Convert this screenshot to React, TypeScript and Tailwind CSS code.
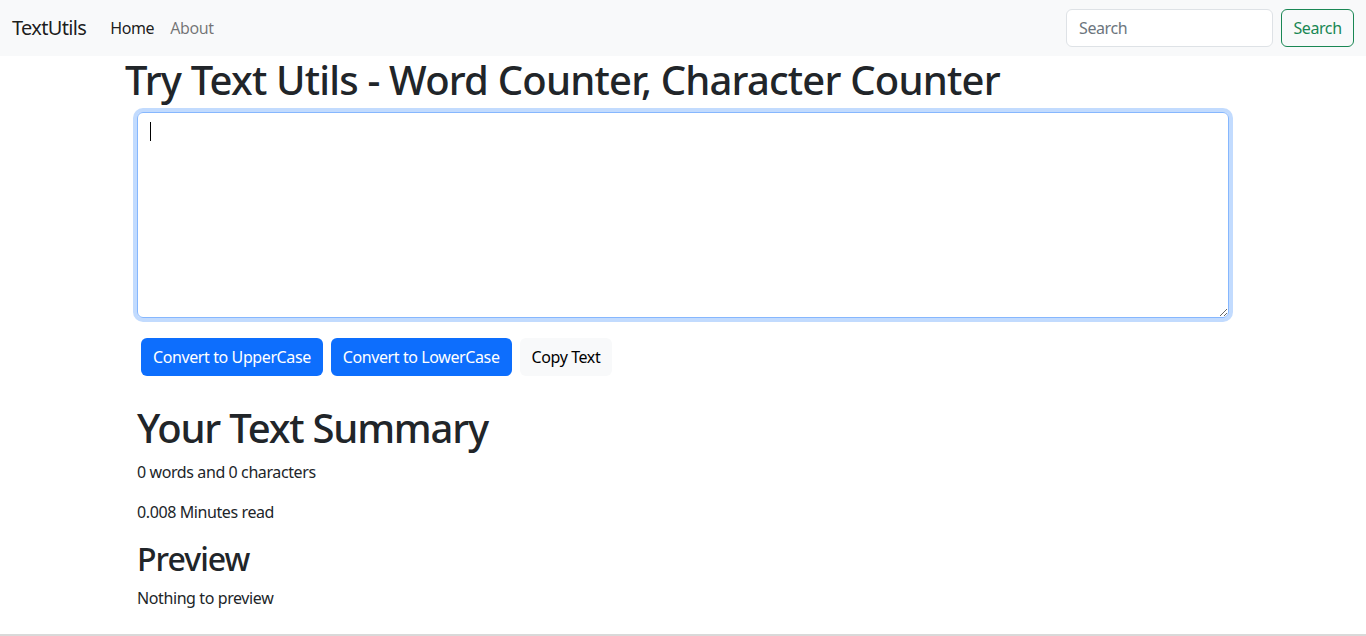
import React from "react";

export default function App() {
  return (
    <div
      className="h-[636px] flex flex-col bg-white text-[#212529] overflow-hidden tracking-[-0.025em]"
      style={{ fontFamily: '"Noto Sans", "Open Sans", sans-serif' }}
    >
      <nav className="h-14 shrink-0 bg-[#f8f9fa] flex items-center px-3">
        <a className="text-[20px] leading-[30px] text-[rgba(0,0,0,0.9)] mr-4 tracking-[-0.033em]">TextUtils</a>
        <div className="flex items-center text-[16px]">
          <a className="px-2 text-[rgba(0,0,0,0.9)]">Home</a>
          <a className="px-2 text-[rgba(0,0,0,0.55)]">About</a>
        </div>
        <div className="ml-auto flex items-center">
          <input
            placeholder="Search"
            className="w-[207px] h-[38px] px-3 rounded-[6px] border border-[#dee2e6] bg-white text-[16px] tracking-[-0.025em] placeholder:text-[#6c757d] outline-none mr-2"
          />
          <button className="w-[73px] h-[38px] rounded-[6px] border border-[#198754] text-[#198754] text-[16px]">
            Search
          </button>
        </div>
      </nav>

      <main className="flex-1 w-[1140px] mx-auto px-3">
        <h1 className="text-[40px] leading-[48px] font-medium mb-2 tracking-[-0.02em]">
          Try Text Utils - Word Counter, Character Counter
        </h1>
        <div className="px-3 mb-4 relative">
          <textarea
            rows={8}
            className="block w-full h-[206px] px-3 py-[6px] text-[16px] leading-6 rounded-[6px] border border-[#86b7fe] shadow-[0_0_0_4px_rgba(13,110,253,0.25)] outline-none resize-y"
          />
          <div className="absolute left-[25px] top-[10px] w-px h-[19px] bg-black" />
        </div>
        <div className="px-3 flex items-center">
          <button className="m-1 h-[38px] px-3 rounded-[6px] bg-[#0d6efd] text-white text-[16px]">
            Convert to UpperCase
          </button>
          <button className="m-1 h-[38px] px-3 rounded-[6px] bg-[#0d6efd] text-white text-[16px]">
            Convert to LowerCase
          </button>
          <button className="m-1 h-[38px] px-3 rounded-[6px] bg-[#f8f9fa] text-black text-[16px]">
            Copy Text
          </button>
        </div>
        <div className="px-3 mt-6">
          <h1 className="text-[40px] leading-[48px] font-medium mb-2 tracking-[-0.03em]">Your Text Summary</h1>
          <p className="text-[16px] leading-6 mb-4">0 words and 0 characters</p>
          <p className="text-[16px] leading-6 mb-4">0.008 Minutes read</p>
          <h2 className="text-[32px] leading-[38px] font-medium mb-2 tracking-[-0.03em]">Preview</h2>
          <p className="text-[16px] leading-6">Nothing to preview</p>
        </div>
      </main>
      <div className="h-[2px] shrink-0 bg-[#d9d9d9]" />
    </div>
  );
}
